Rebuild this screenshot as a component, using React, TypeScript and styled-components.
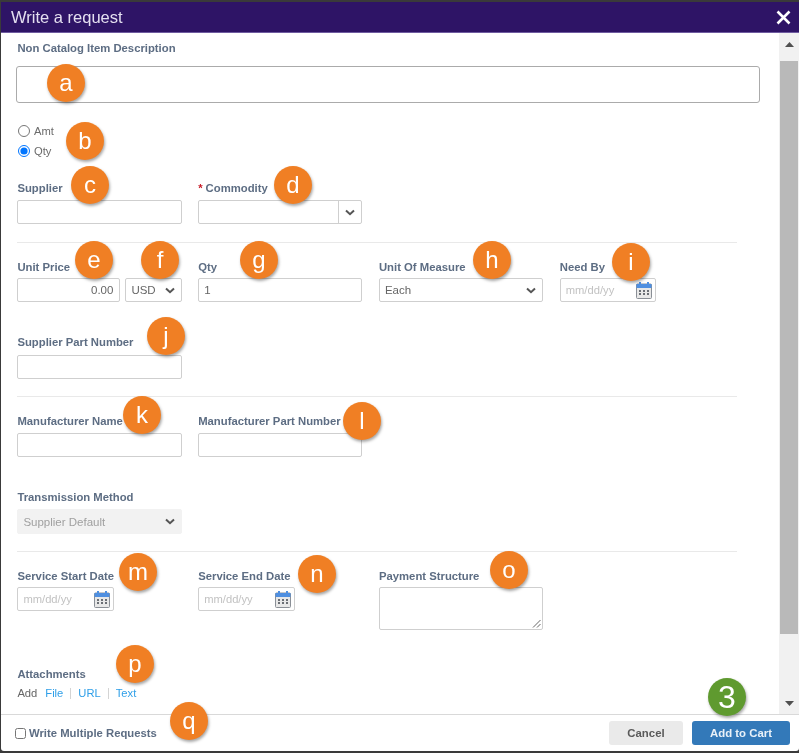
import styled, {createGlobalStyle} from "styled-components";

const GlobalStyle = createGlobalStyle`
    html, body {
        margin: 0;
        padding: 0;
        background: #3a3a3a;
    }
    * { box-sizing: border-box; }
`;

const Dialog = styled.div`
    position: relative;
    width: 799px;
    height: 753px;
    padding: 2px 0 2px 1px;
    overflow: hidden;
    display: flex;
    flex-direction: column;
    font-family: "Liberation Sans", Arial, sans-serif;
    background: #3a3a3a;
    filter: blur(0.45px);
`;

const TitleBar = styled.header`
    height: 31px;
    flex: none;
    display: flex;
    align-items: center;
    justify-content: space-between;
    padding: 1px 7px 0 10px;
    background: #2e1466;
    border-bottom: 1px solid #6f5ba0;
    color: #e4dff0;
    font-size: 16.5px;
`;

const CloseIcon = styled.svg`
    width: 17px;
    height: 17px;
`;

const Body = styled.div`
    flex: 1;
    min-height: 0;
    display: flex;
    background: #fff;
`;

const Form = styled.form`
    flex: 1;
    padding: 8px 0 0 16.4px;
    overflow: hidden;
`;

const Label = styled.div<{$mb?: number}>`
    height: 14px;
    line-height: 14px;
    margin-bottom: ${p => p.$mb ?? 5}px;
    font-size: 11.3px;
    font-weight: bold;
    color: #5d6d83;
    white-space: nowrap;
`;

const Required = styled.span`
    color: #c8202c;
    margin-right: 3px;
`;

const BigInput = styled.div`
    width: 744px;
    height: 37px;
    margin-left: -1.4px;
    border: 1px solid #ababab;
    border-radius: 3px;
    background: #fff;
`;

const RadioGroup = styled.div`
    margin-top: 18px;
    display: flex;
    flex-direction: column;
`;

const RadioRow = styled.label`
    height: 20px;
    display: flex;
    align-items: center;
    gap: 4px;
    font-size: 11.2px;
    color: #6b6b6b;
`;

const Radio = styled.input`
    width: 12px;
    height: 12px;
    margin: 0 0 0 0.6px;
`;

const Row = styled.div<{$top: number}>`
    display: flex;
    gap: 16.6px;
    margin-top: ${p => p.$top}px;
`;

const Field = styled.div<{$w: number}>`
    width: ${p => p.$w}px;
    flex: none;
`;

const Box = styled.div<{$h?: number; $disabled?: boolean}>`
    height: ${p => p.$h ?? 24}px;
    display: flex;
    align-items: center;
    justify-content: space-between;
    padding: 0 6px 0 5px;
    border: 1px solid ${p => (p.$disabled ? "#f2f2f2" : "#cfcfcf")};
    border-radius: 2px;
    background: ${p => (p.$disabled ? "#f2f2f2" : "#fff")};
    font-size: 11.5px;
    color: ${p => (p.$disabled ? "#a0a0a0" : "#666")};
`;

const PriceBox = styled(Box)`
    justify-content: flex-end;
`;

const UnitPair = styled.div`
    display: flex;
    gap: 5px;
`;

const ComboBox = styled(Box)`
    padding: 0;
`;

const ComboButton = styled.div`
    width: 23px;
    height: 100%;
    display: flex;
    align-items: center;
    justify-content: center;
    border-left: 1px solid #cfcfcf;
`;

const Chevron = styled.svg`
    width: 10px;
    height: 7px;
    flex: none;
`;

const DatePlaceholder = styled.span`
    font-size: 11.2px;
    color: #c2c2c2;
`;

const DateBox = styled(Box)`
    padding: 0 3px 0 5px;
`;

const TextArea = styled.div`
    height: 43px;
    position: relative;
    border: 1px solid #cfcfcf;
    border-radius: 2px;
`;

const Grip = styled.svg`
    position: absolute;
    right: 1px;
    bottom: 1px;
    width: 9px;
    height: 9px;
`;

const Divider = styled.div<{$top: number}>`
    width: 720px;
    height: 1px;
    margin-top: ${p => p.$top}px;
    background: #e9e9e9;
`;

const Attachments = styled.div`
    margin-top: 37px;
`;

const AttachRow = styled.div`
    display: flex;
    align-items: center;
    height: 14px;
    font-size: 11.2px;
    color: #666;
`;

const AttachLink = styled.a`
    color: #2f9fe8;
    margin-left: 7px;
    padding-right: 7px;
    border-right: 1px solid #d4d4d4;
    line-height: 11px;
    &:first-of-type { margin-left: 8px; }
    &:last-child { border-right: none; }
`;

const Scrollbar = styled.div`
    width: 20px;
    flex: none;
    display: flex;
    flex-direction: column;
    background: #f1f1f1;
`;

const ScrollArrow = styled.div<{$h: number; $pb?: number}>`
    height: ${p => p.$h}px;
    flex: none;
    padding-bottom: ${p => p.$pb ?? 0}px;
    display: flex;
    align-items: center;
    justify-content: center;
`;

const ScrollThumb = styled.div`
    height: 573px;
    flex: none;
    margin: 0 1px;
    background: #b9b9b9;
`;

const ScrollEnd = styled(ScrollArrow)`
    margin-top: auto;
`;

const Footer = styled.footer`
    height: 37px;
    flex: none;
    display: flex;
    align-items: center;
    justify-content: space-between;
    padding: 0 9px 0 14px;
    border-top: 1px solid #d9d9d9;
    border-radius: 0 0 3px 3px;
    background: #fff;
`;

const MultiLabel = styled.label`
    display: flex;
    align-items: center;
    gap: 3px;
    font-size: 11.3px;
    font-weight: bold;
    color: #5d6d83;
`;

const CheckBox = styled.input`
    width: 11px;
    height: 11px;
    margin: 0;
`;

const Buttons = styled.div`
    display: flex;
    gap: 9px;
`;

const Button = styled.button<{$primary?: boolean}>`
    width: ${p => (p.$primary ? 98 : 74)}px;
    height: 24px;
    padding: 0;
    border: none;
    border-radius: 3px;
    font: bold 11.4px "Liberation Sans", Arial, sans-serif;
    color: ${p => (p.$primary ? "#e8f0f8" : "#5a5a5a")};
    background: ${p => (p.$primary ? "#3379b9" : "#eaeaea")};
`;

const Badge = styled.div<{$x: number; $y: number; $green?: boolean}>`
    position: absolute;
    left: ${p => p.$x - 19}px;
    top: ${p => p.$y - 19}px;
    width: 38px;
    height: 38px;
    display: flex;
    align-items: center;
    justify-content: center;
    border-radius: 50%;
    background: ${p => (p.$green ? "#5f9a2f" : "#f07f24")};
    box-shadow: 1px 2px 3px rgba(0, 0, 0, 0.35);
    font-family: "Liberation Sans", Arial, sans-serif;
    font-size: ${p => (p.$green ? 32 : 24)}px;
    line-height: 1;
    color: #fff;
`;

const badges: [string, number, number][] = [
    ["a", 66, 83], ["b", 85, 141], ["c", 90, 185], ["d", 293, 185],
    ["e", 94, 260], ["f", 160, 260], ["g", 259, 260], ["h", 492, 260],
    ["i", 631, 262], ["j", 166, 336], ["k", 142, 415], ["l", 362, 421],
    ["m", 138, 572], ["n", 317, 574], ["o", 509, 570], ["p", 135, 664],
    ["q", 189, 721],
];

function ChevronDown() {
    return (
        <Chevron viewBox="0 0 10 7">
            <path d="M1 1.5 L5 5.2 L9 1.5" fill="none" stroke="#555" strokeWidth="2"/>
        </Chevron>
    );
}

function CalendarIcon() {
    return (
        <svg width="16" height="17" viewBox="0 0 16 17">
            <rect x="0.5" y="2" width="15" height="14.5" rx="1" fill="#e8e8e8" stroke="#8a8f96"/>
            <rect x="0.5" y="2" width="15" height="4" fill="#4f8fe0"/>
            <rect x="3" y="0" width="2" height="4" fill="#4f8fe0"/>
            <rect x="11" y="0" width="2" height="4" fill="#4f8fe0"/>
            <path d="M3 8h2v2H3zM7 8h2v2H7zM11 8h2v2h-2zM3 11h2v2H3zM7 11h2v2H7zM11 11h2v2h-2z" fill="#6b6f75"/>
        </svg>
    );
}

function DateInput() {
    return (
        <DateBox>
            <DatePlaceholder>mm/dd/yy</DatePlaceholder>
            <CalendarIcon/>
        </DateBox>
    );
}

export default function App() {
    return (
        <>
            <GlobalStyle/>
            <Dialog>
                <TitleBar>
                    Write a request
                    <CloseIcon viewBox="0 0 17 17">
                        <path d="M2.5 2.5 L14.5 14.5 M14.5 2.5 L2.5 14.5" stroke="#fff" strokeWidth="2.6"/>
                    </CloseIcon>
                </TitleBar>
                <Body>
                    <Form>
                        <Label $mb={11}>Non Catalog Item Description</Label>
                        <BigInput/>
                        <RadioGroup>
                            <RadioRow><Radio type="radio" name="kind" readOnly/>Amt</RadioRow>
                            <RadioRow><Radio type="radio" name="kind" defaultChecked/>Qty</RadioRow>
                        </RadioGroup>
                        <Row $top={20}>
                            <Field $w={164.2}>
                                <Label>Supplier</Label>
                                <Box/>
                            </Field>
                            <Field $w={164.2}>
                                <Label><Required>*</Required>Commodity</Label>
                                <ComboBox>
                                    <span/>
                                    <ComboButton><ChevronDown/></ComboButton>
                                </ComboBox>
                            </Field>
                        </Row>
                        <Divider $top={18}/>
                        <Row $top={17}>
                            <Field $w={164.2}>
                                <Label $mb={4}>Unit Price</Label>
                                <UnitPair>
                                    <Field $w={103}><PriceBox>0.00</PriceBox></Field>
                                    <Field $w={56.2}><Box>USD<ChevronDown/></Box></Field>
                                </UnitPair>
                            </Field>
                            <Field $w={164.2}>
                                <Label $mb={4}>Qty</Label>
                                <Box>1</Box>
                            </Field>
                            <Field $w={164.2}>
                                <Label $mb={4}>Unit Of Measure</Label>
                                <Box>Each<ChevronDown/></Box>
                            </Field>
                            <Field $w={96.4}>
                                <Label $mb={4}>Need By</Label>
                                <DateInput/>
                            </Field>
                        </Row>
                        <Row $top={33}>
                            <Field $w={164.2}>
                                <Label $mb={6}>Supplier Part Number</Label>
                                <Box/>
                            </Field>
                        </Row>
                        <Divider $top={17}/>
                        <Row $top={17}>
                            <Field $w={164.2}>
                                <Label>Manufacturer Name</Label>
                                <Box/>
                            </Field>
                            <Field $w={164.2}>
                                <Label>Manufacturer Part Number</Label>
                                <Box/>
                            </Field>
                        </Row>
                        <Row $top={33}>
                            <Field $w={164.2}>
                                <Label>Transmission Method</Label>
                                <Box $h={25} $disabled>Supplier Default<ChevronDown/></Box>
                            </Field>
                        </Row>
                        <Divider $top={17}/>
                        <Row $top={17}>
                            <Field $w={164.2}>
                                <Label $mb={4}>Service Start Date</Label>
                                <Field $w={96.4}><DateInput/></Field>
                            </Field>
                            <Field $w={164.2}>
                                <Label $mb={4}>Service End Date</Label>
                                <Field $w={96.4}><DateInput/></Field>
                            </Field>
                            <Field $w={164.2}>
                                <Label $mb={4}>Payment Structure</Label>
                                <TextArea>
                                    <Grip viewBox="0 0 9 9">
                                        <path d="M8.5 1 L1 8.5 M8.5 5 L5 8.5" stroke="#666" strokeWidth="1"/>
                                    </Grip>
                                </TextArea>
                            </Field>
                        </Row>
                        <Attachments>
                            <Label>Attachments</Label>
                            <AttachRow>
                                Add
                                <AttachLink>File</AttachLink>
                                <AttachLink>URL</AttachLink>
                                <AttachLink>Text</AttachLink>
                            </AttachRow>
                        </Attachments>
                    </Form>
                    <Scrollbar>
                        <ScrollArrow $h={28} $pb={6}>
                            <svg width="9" height="5" viewBox="0 0 9 5"><path d="M4.5 0 L9 5 H0 Z" fill="#505050"/></svg>
                        </ScrollArrow>
                        <ScrollThumb/>
                        <ScrollEnd $h={22}>
                            <svg width="9" height="5" viewBox="0 0 9 5"><path d="M0 0 H9 L4.5 5 Z" fill="#505050"/></svg>
                        </ScrollEnd>
                    </Scrollbar>
                </Body>
                <Footer>
                    <MultiLabel><CheckBox type="checkbox"/>Write Multiple Requests</MultiLabel>
                    <Buttons>
                        <Button type="button">Cancel</Button>
                        <Button type="button" $primary>Add to Cart</Button>
                    </Buttons>
                </Footer>
                {badges.map(([letter, x, y]) => (
                    <Badge key={letter} $x={x} $y={y}>{letter}</Badge>
                ))}
                <Badge $x={727} $y={697} $green>3</Badge>
            </Dialog>
        </>
    );
}
